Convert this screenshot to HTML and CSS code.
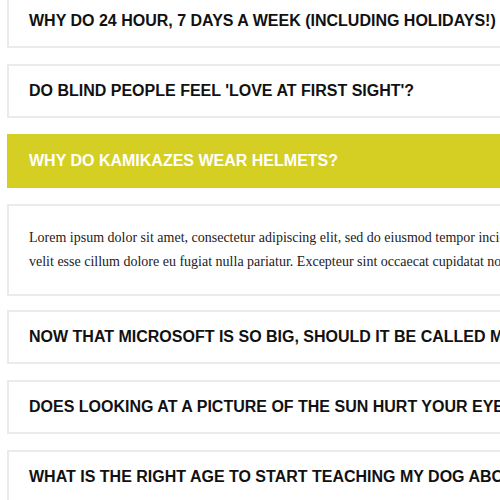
FILE: index.html
```html
<!DOCTYPE html>
<html>
<head>
<meta charset="utf-8">
<link rel="stylesheet" href="styles.css">
</head>
<body>
<div class="faq">
  <div class="item"><h3 class="title">Why do 24 hour, 7 days a week (including holidays!) stores have locks?</h3></div>
  <div class="item"><h3 class="title">Do blind people feel 'love at first sight'?</h3></div>
  <div class="item active"><h3 class="title">Why do kamikazes wear helmets?</h3></div>
  <div class="answer"><p>Lorem ipsum dolor sit amet, consectetur adipiscing elit, sed do eiusmod tempor incididunt ut labore et dolore magna aliqua. Ut enim ad minim veniam, quis nostrud exercitation ullamco laboris nisi ut aliquip ex ea commodo consequat. Duis aute irure dolor in reprehenderit in voluptate<br>velit esse cillum dolore eu fugiat nulla pariatur. Excepteur sint occaecat cupidatat non proident, sunt in culpa qui officia deserunt mollit anim id est laborum.</p></div>
  <div class="item"><h3 class="title">Now that Microsoft is so big, should it be called Macrosoft?</h3></div>
  <div class="item"><h3 class="title">Does looking at a picture of the sun hurt your eyes?</h3></div>
  <div class="item"><h3 class="title">What is the right age to start teaching my dog about the birds and the bees?</h3></div>
</div>
</body>
</html>
```
FILE: styles.css
```css
html, body {
  margin: 0;
  padding: 0;
  background: #ffffff;
  overflow: hidden;
}
body {
  width: 500px;
  height: 500px;
}
.faq {
  margin: -6px 0 0 7px;
  width: 1400px;
  display: flex;
  flex-direction: column;
}
.item {
  border: 2px solid #ebebeb;
  padding: 16px 20px;
  margin-bottom: 16px;
  background: #fff;
}
.title {
  margin: 0;
  font-family: "Liberation Sans", Arial, sans-serif;
  font-weight: bold;
  font-size: 16px;
  line-height: 18px;
  text-transform: uppercase;
  color: #111;
  white-space: nowrap;
}
.item.active {
  background: #d5cf24;
  border-color: #d5cf24;
}
.item.active .title {
  color: #fff;
}
.answer {
  border: 2px solid #ebebeb;
  padding: 20px 20px;
  margin-bottom: 14px;
}
.answer p {
  margin: 0;
  font-family: "Liberation Serif", "Times New Roman", serif;
  font-size: 14px;
  line-height: 24px;
  color: #222;
  white-space: nowrap;
}
```
